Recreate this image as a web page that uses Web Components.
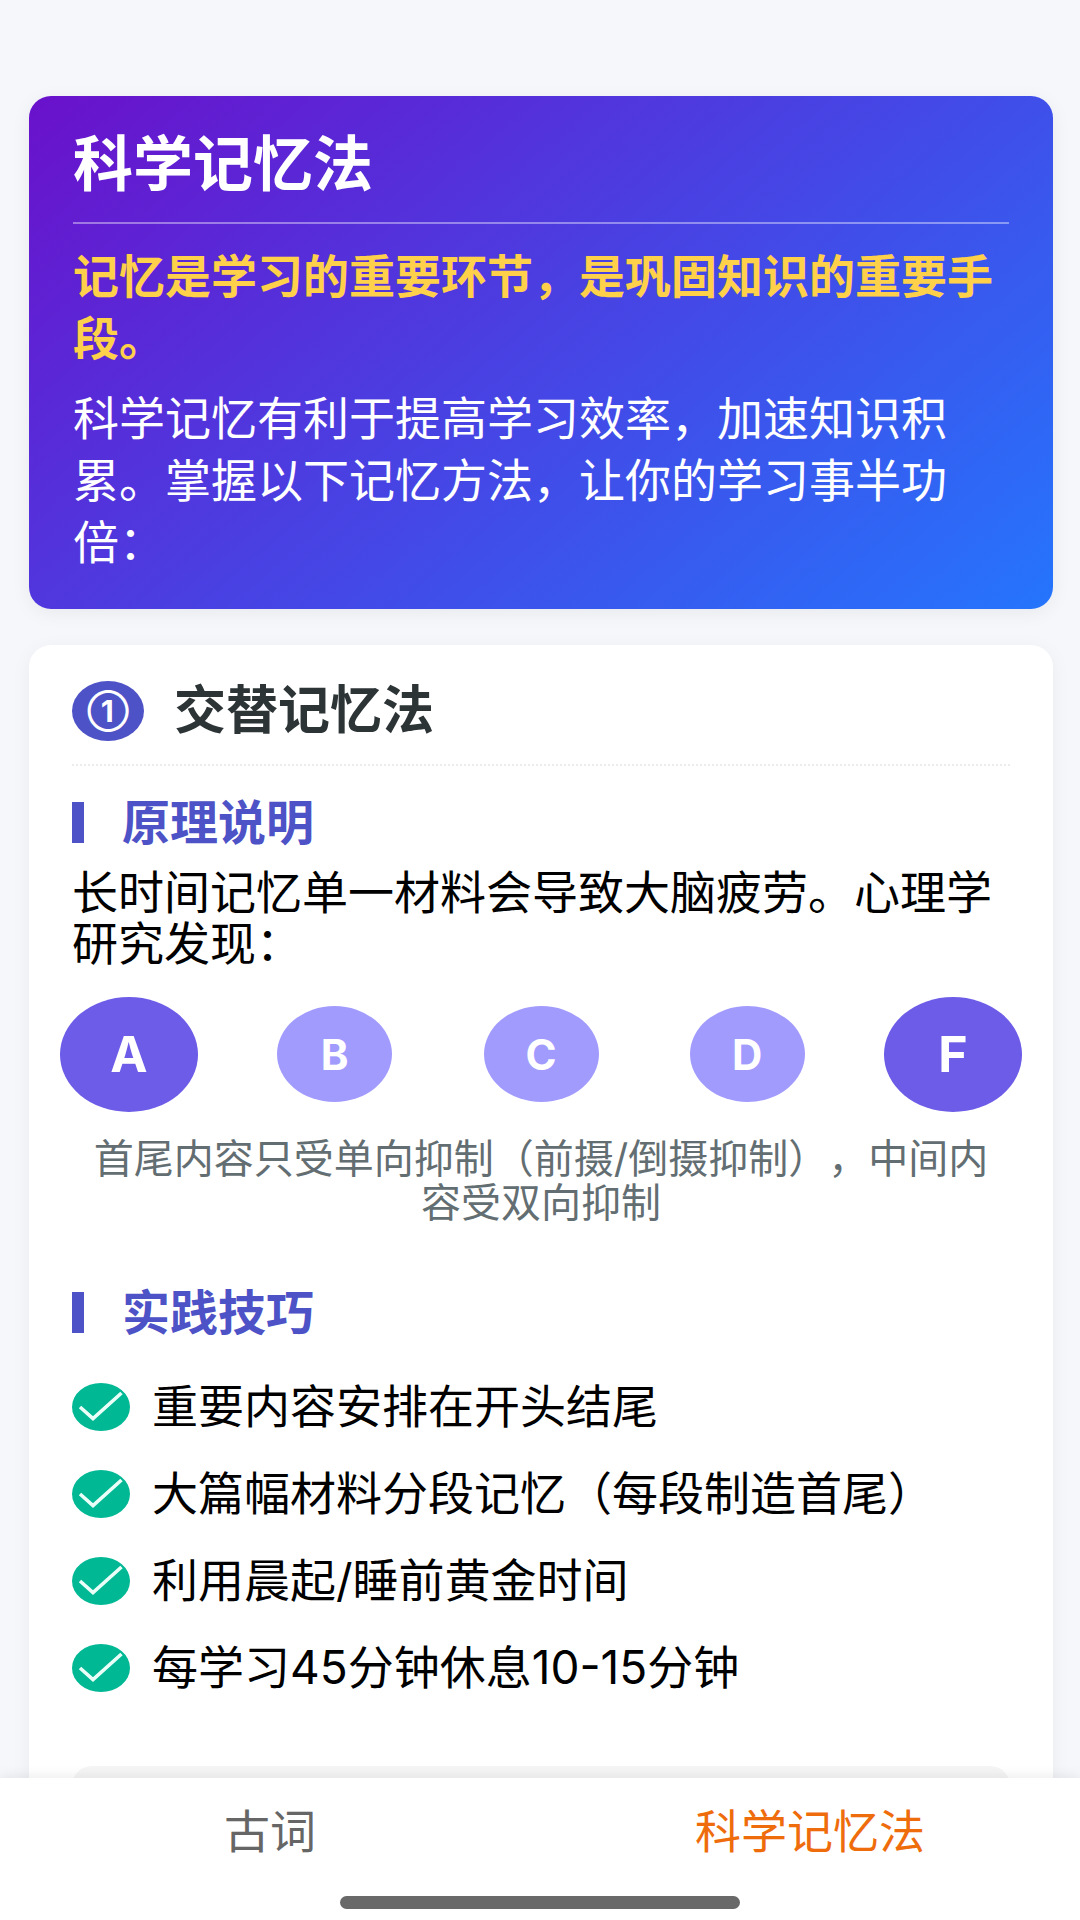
<!DOCTYPE html>
<html lang="zh-CN">
<head>
<meta charset="UTF-8">
<meta name="viewport" content="width=device-width, initial-scale=1.0">
<title>科学记忆法</title>
<style>
    body {
        margin: 0;
        font-family: Inter, "Noto Sans CJK SC", sans-serif;
        font-size: 46px;
        color: #000;
        text-spacing-trim: space-all;
    }
</style>
</head>
<body>

<memory-app>
    <intro-card>
        <span slot="title">科学记忆法</span>
        <span slot="highlight">记忆是学习的重要环节，是巩固知识的重要手段。</span>
        科学记忆有利于提高学习效率，加速知识积累。掌握以下记忆方法，让你的学习事半功倍：
    </intro-card>

    <method-card number="①" name="交替记忆法">
        <sub-heading>原理说明</sub-heading>
        <text-block>长时间记忆单一材料会导致大脑疲劳。心理学研究发现：</text-block>
        <memory-sequence items="A,B,C,D,F">首尾内容只受单向抑制（前摄/倒摄抑制），中间内容受双向抑制</memory-sequence>
        <sub-heading>实践技巧</sub-heading>
        <tip-list>
            <tip-item>重要内容安排在开头结尾</tip-item>
            <tip-item>大篇幅材料分段记忆（每段制造首尾）</tip-item>
            <tip-item>利用晨起/睡前黄金时间</tip-item>
            <tip-item>每学习45分钟休息10-15分钟</tip-item>
        </tip-list>
        <example-box></example-box>
    </method-card>

    <tab-bar slot="nav">
        <tab-button>古词</tab-button>
        <tab-button active>科学记忆法</tab-button>
    </tab-bar>
</memory-app>

<script>
// crea el shadow root a partir de un template
function attach(el, html) {
    const template = document.createElement("template");
    template.innerHTML = html;
    el.attachShadow({ mode: "open" });
    el.shadowRoot.appendChild(template.content.cloneNode(true));
}

class MemoryApp extends HTMLElement {
    constructor() {
        super();
        attach(this, `
            <style>
                :host {
                    display: flex;
                    flex-direction: column;
                    height: 100vh;
                    background: #f5f7fb;
                }

                main {
                    flex: 1;
                    min-height: 0;
                    overflow-y: auto;
                    scrollbar-width: none;
                    display: flex;
                    flex-direction: column;
                    gap: 36px;
                    padding: 96px 27px 36px 29px;
                }
            </style>

            <main><slot></slot></main>
            <slot name="nav"></slot>
        `);
    }
}

class IntroCard extends HTMLElement {
    constructor() {
        super();
        attach(this, `
            <style>
                :host {
                    display: block;
                    padding: 36px 44px;
                    border-radius: 22px;
                    background: linear-gradient(140deg, #6a11cb 0%, #2575fc 100%);
                    box-shadow: 0 4px 20px rgba(0, 0, 0, 0.06);
                    color: #fff;
                }

                h1 {
                    margin: 0 0 21px;
                    padding-bottom: 26px;
                    border-bottom: 2px solid rgba(255, 255, 255, 0.4);
                    font-size: 60px;
                    line-height: 64px;
                }

                p {
                    margin: 0;
                    line-height: 62px;
                }

                .highlight {
                    margin-bottom: 18px;
                    color: #ffd04a;
                    font-weight: bold;
                }
            </style>

            <h1><slot name="title"></slot></h1>
            <p class="highlight"><slot name="highlight"></slot></p>
            <p><slot></slot></p>
        `);
    }
}

class MethodCard extends HTMLElement {
    constructor() {
        super();
        attach(this, `
            <style>
                :host {
                    display: block;
                    padding: 36px 43px;
                    border-radius: 22px;
                    background: #fff;
                    box-shadow: 0 4px 20px rgba(0, 0, 0, 0.05);
                }

                header {
                    display: flex;
                    align-items: center;
                    gap: 30px;
                    padding-bottom: 23px;
                    margin-bottom: 36px;
                    border-bottom: 2px dotted #ececec;
                }

                .number {
                    display: flex;
                    align-items: center;
                    justify-content: center;
                    width: 72px;
                    height: 60px;
                    border-radius: 50%;
                    background: #4d52c6;
                    color: #fff;
                    font-size: 30px;
                    line-height: 60px;
                    font-weight: bold;
                }

                h2 {
                    margin: 0;
                    color: #2d3436;
                    font-size: 52px;
                    line-height: 60px;
                }
            </style>

            <header>
                <span class="number"></span>
                <h2></h2>
            </header>
            <slot></slot>
        `);
    }

    connectedCallback() {
        this.shadowRoot.querySelector(".number").textContent = this.getAttribute("number");
        this.shadowRoot.querySelector("h2").textContent = this.getAttribute("name");
    }
}

class SubHeading extends HTMLElement {
    constructor() {
        super();
        attach(this, `
            <style>
                :host {
                    display: block;
                }

                h3 {
                    margin: 0;
                    padding-left: 38px;
                    border-left: 12px solid #4d52c6;
                    color: #4d52c6;
                    font-size: 48px;
                    line-height: 41px;
                }
            </style>

            <h3><slot></slot></h3>
        `);
    }
}

class TextBlock extends HTMLElement {
    constructor() {
        super();
        attach(this, `
            <style>
                :host {
                    display: block;
                    margin: 24px 0 37px;
                }

                p {
                    margin: 0;
                    line-height: 51px;
                }
            </style>

            <p><slot></slot></p>
        `);
    }
}

class MemorySequence extends HTMLElement {
    constructor() {
        super();
        attach(this, `
            <style>
                :host {
                    display: block;
                    margin-bottom: 67px;
                }

                .row {
                    display: flex;
                    align-items: center;
                    justify-content: space-between;
                    margin-bottom: 35px;
                }

                .item {
                    display: flex;
                    align-items: center;
                    justify-content: center;
                    width: 115px;
                    height: 96px;
                    border-radius: 50%;
                    background: #a29bfe;
                    color: #fff;
                    font-size: 42px;
                    font-weight: bold;
                }

                /* los extremos son mas grandes y sobresalen de la fila */
                .item:first-child,
                .item:last-child {
                    width: 138px;
                    height: 115px;
                    margin: -10px -12px;
                    background: #6c5ce7;
                    font-size: 50px;
                }

                p {
                    margin: 0;
                    padding: 0 12px;
                    color: #636e72;
                    font-size: 40px;
                    line-height: 44px;
                    text-align: center;
                }
            </style>

            <div class="row"></div>
            <p><slot></slot></p>
        `);
    }

    connectedCallback() {
        const row = this.shadowRoot.querySelector(".row");
        row.innerHTML = this.getAttribute("items")
            .split(",")
            .map((item) => `<span class="item">${item}</span>`)
            .join("");
    }
}

class TipList extends HTMLElement {
    constructor() {
        super();
        attach(this, `
            <style>
                :host {
                    display: flex;
                    flex-direction: column;
                    gap: 36px;
                    margin: 48px 0 73px;
                }
            </style>

            <slot></slot>
        `);
    }

    connectedCallback() {
        this.setAttribute("role", "list");
    }
}

class TipItem extends HTMLElement {
    constructor() {
        super();
        attach(this, `
            <style>
                :host {
                    display: flex;
                    align-items: center;
                    gap: 22px;
                    line-height: 51px;
                }

                svg {
                    flex: none;
                    width: 58px;
                    height: 48px;
                }
            </style>

            <svg viewBox="0 0 58 48" aria-hidden="true">
                <ellipse cx="29" cy="24" rx="29" ry="24" fill="#00b894"/>
                <path d="M8 24 L21 35.5 L49.5 10" fill="none" stroke="#eafff8" stroke-width="3.6"/>
            </svg>
            <span><slot></slot></span>
        `);
    }

    connectedCallback() {
        this.setAttribute("role", "listitem");
    }
}

class ExampleBox extends HTMLElement {
    constructor() {
        super();
        attach(this, `
            <style>
                :host {
                    display: block;
                    min-height: 160px;
                    border-radius: 20px;
                    background: #f5f5f5;
                }
            </style>

            <slot></slot>
        `);
    }
}

class TabBar extends HTMLElement {
    constructor() {
        super();
        attach(this, `
            <style>
                :host {
                    position: relative;
                    display: block;
                    background: #fff;
                    box-shadow: 0 -2px 12px rgba(0, 0, 0, 0.08);
                }

                nav {
                    display: flex;
                    padding: 26px 0 38px;
                }

                .home {
                    width: 37%;
                    height: 13px;
                    margin: 0 auto 11px;
                    border-radius: 7px;
                    background: #696969;
                }
            </style>

            <nav><slot></slot></nav>
            <div class="home"></div>
        `);
    }
}

class TabButton extends HTMLElement {
    constructor() {
        super();
        attach(this, `
            <style>
                :host {
                    flex: 1;
                    display: block;
                    color: #666;
                }

                :host([active]) {
                    color: #ee6c0c;
                }

                button {
                    display: block;
                    width: 100%;
                    padding: 0;
                    border: none;
                    background: none;
                    color: inherit;
                    font: inherit;
                    line-height: 54px;
                    cursor: pointer;
                }
            </style>

            <button type="button"><slot></slot></button>
        `);
    }

    // marcar la pestaña pulsada
    connectedCallback() {
        this.shadowRoot.querySelector("button").addEventListener("click", () => {
            for (const tab of this.parentElement.children) {
                tab.toggleAttribute("active", tab === this);
            }
        });
    }
}

customElements.define("memory-app", MemoryApp);
customElements.define("intro-card", IntroCard);
customElements.define("method-card", MethodCard);
customElements.define("sub-heading", SubHeading);
customElements.define("text-block", TextBlock);
customElements.define("memory-sequence", MemorySequence);
customElements.define("tip-list", TipList);
customElements.define("tip-item", TipItem);
customElements.define("example-box", ExampleBox);
customElements.define("tab-bar", TabBar);
customElements.define("tab-button", TabButton);
</script>
</body>
</html>
